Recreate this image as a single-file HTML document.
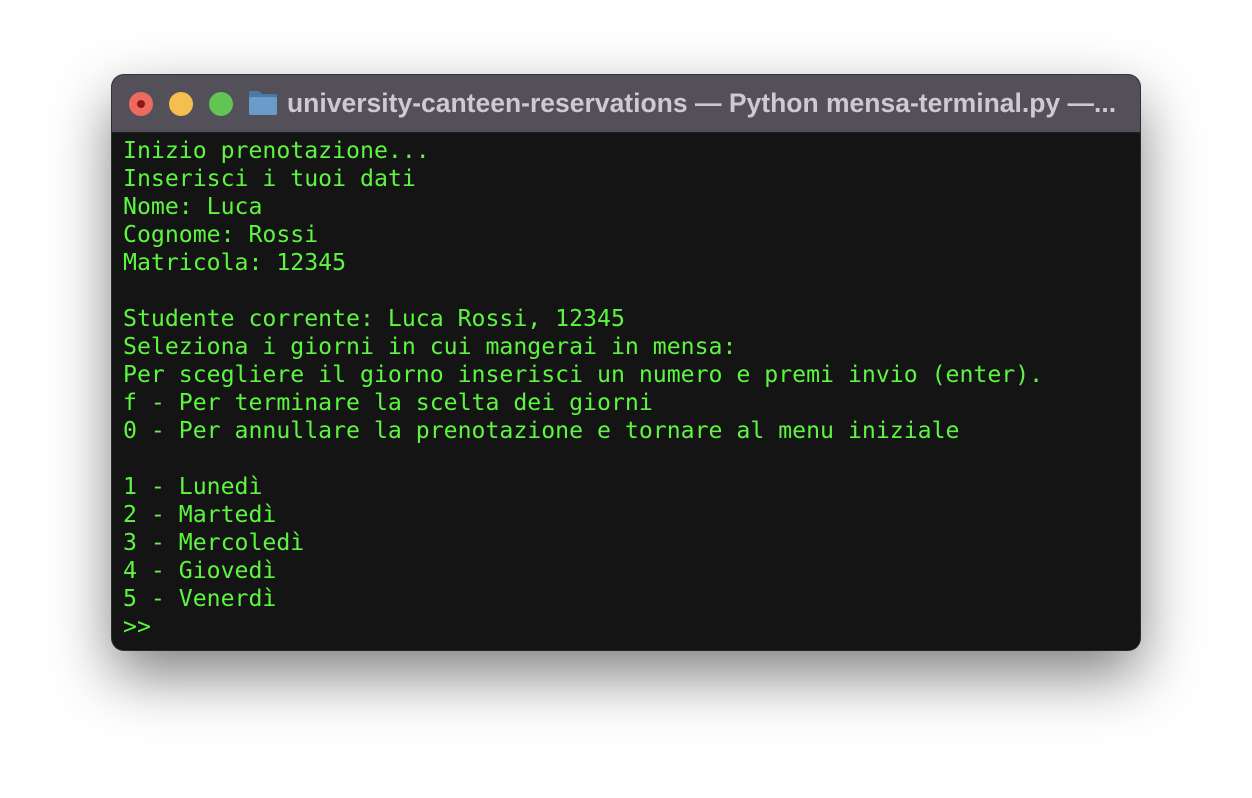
<!DOCTYPE html>
<html><head><meta charset="utf-8"><style>
html,body{margin:0;padding:0;width:1252px;height:798px;background:#fff;overflow:hidden}
.win{position:absolute;left:112px;top:75px;width:1028px;height:575px;border-radius:12px;background:#141414;box-shadow:0 25px 60px rgba(0,0,0,.5),0 0 0 1px #3a3a3a;overflow:hidden}
.tb{position:absolute;left:0;top:0;width:100%;height:57px;background:#535059;border-bottom:1px solid #1e1e1e}
.dot{position:absolute;top:17px;width:24px;height:24px;border-radius:50%}
.title{position:absolute;left:175px;top:13px;font:bold 26.5px "Liberation Sans",sans-serif;color:#cdcad0;white-space:nowrap}
pre{position:absolute;left:11px;top:62px;margin:0;font-family:"DejaVu Sans Mono",monospace;font-size:23.17px;line-height:28px;color:#5ef542}
</style></head><body>
<div class="win">
<div class="tb">
<div class="dot" style="left:17px;background:#ee6a5e"><div style="position:absolute;left:8px;top:8px;width:8px;height:8px;border-radius:50%;background:#8c1a10"></div></div>
<div class="dot" style="left:57px;background:#f5bf4f"></div>
<div class="dot" style="left:97px;background:#61c554"></div>
<svg style="position:absolute;left:136px;top:15px" width="30" height="26" viewBox="0 0 30 26"><path d="M1 3 Q1 1 3 1 H11 L14 4 H27 Q29 4 29 6 V23 Q29 25 27 25 H3 Q1 25 1 23Z" fill="#4a7aa8"/><rect x="1" y="7" width="28" height="18" rx="2" fill="#6b9bc9"/></svg>
<div class="title">university-canteen-reservations — Python mensa-terminal.py —...</div>
</div>
<pre>Inizio prenotazione...
Inserisci i tuoi dati
Nome: Luca
Cognome: Rossi
Matricola: 12345

Studente corrente: Luca Rossi, 12345
Seleziona i giorni in cui mangerai in mensa:
Per scegliere il giorno inserisci un numero e premi invio (enter).
f - Per terminare la scelta dei giorni
0 - Per annullare la prenotazione e tornare al menu iniziale

1 - Lunedì
2 - Martedì
3 - Mercoledì
4 - Giovedì
5 - Venerdì
&gt;&gt;</pre>
</div>
</body></html>
